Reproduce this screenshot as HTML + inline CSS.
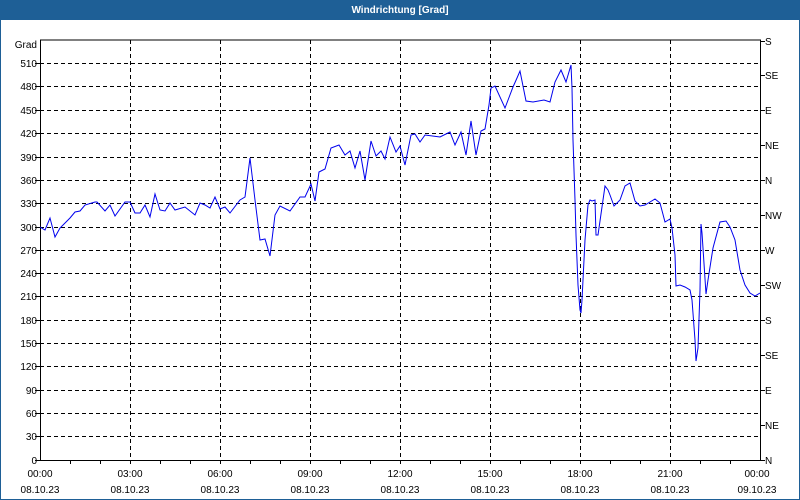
<!DOCTYPE html>
<html><head><meta charset="utf-8"><style>
html,body{margin:0;padding:0;width:800px;height:500px;overflow:hidden;background:#fff}
svg{display:block}
text{font-family:"Liberation Sans",sans-serif;font-size:10px;fill:#000}
</style></head><body>
<svg width="800" height="500" xmlns="http://www.w3.org/2000/svg">
<rect x="0" y="0" width="800" height="500" fill="#fff"/>
<rect x="0" y="0" width="800" height="20" fill="#1e5f96"/>
<rect x="0" y="0" width="1" height="500" fill="#1e5f96"/>
<rect x="799" y="0" width="1" height="500" fill="#1e5f96"/>
<rect x="0" y="499" width="800" height="1" fill="#1e5f96"/>
<text x="400" y="13" text-anchor="middle" style="fill:#fff;font-weight:bold;font-size:10px">Windrichtung [Grad]</text>
<g stroke="#000" stroke-dasharray="4,3" stroke-width="1">
<path d="M40 63.5H760M40 86.5H760M40 110.5H760M40 133.5H760M40 157.5H760M40 180.5H760M40 203.5H760M40 227.5H760M40 250.5H760M40 273.5H760M40 296.5H760M40 320.5H760M40 343.5H760M40 366.5H760M40 390.5H760M40 413.5H760M40 436.5H760"/>
<path d="M130.5 40V460M220.5 40V460M310.5 40V460M400.5 40V460M490.5 40V460M580.5 40V460M670.5 40V460"/>
</g>
<g stroke="#000" stroke-width="1" fill="none">
<path d="M40.5 40V460.5H760.5V40H40"/>
<path d="M760 41.5h5M760 75.5h5M760 110.5h5M760 145.5h5M760 180.5h5M760 215.5h5M760 250.5h5M760 285.5h5M760 320.5h5M760 355.5h5M760 390.5h5M760 425.5h5M760 460.5h5"/>
<path d="M35 63.5h5M35 86.5h5M35 110.5h5M35 133.5h5M35 157.5h5M35 180.5h5M35 203.5h5M35 227.5h5M35 250.5h5M35 273.5h5M35 296.5h5M35 320.5h5M35 343.5h5M35 366.5h5M35 390.5h5M35 413.5h5M35 436.5h5M35 460.5h5"/>
<path d="M70.5 460v4M100.5 460v4M130.5 460v4M160.5 460v4M190.5 460v4M220.5 460v4M250.5 460v4M280.5 460v4M310.5 460v4M340.5 460v4M370.5 460v4M400.5 460v4M430.5 460v4M460.5 460v4M490.5 460v4M520.5 460v4M550.5 460v4M580.5 460v4M610.5 460v4M640.5 460v4M670.5 460v4M700.5 460v4M730.5 460v4"/>
</g>
<g text-anchor="end">
<text x="37" y="48">Grad</text>
<text x="37" y="67">510</text><text x="37" y="90">480</text><text x="37" y="114">450</text><text x="37" y="137">420</text><text x="37" y="161">390</text><text x="37" y="184">360</text><text x="37" y="207">330</text><text x="37" y="231">300</text><text x="37" y="254">270</text><text x="37" y="277">240</text><text x="37" y="300">210</text><text x="37" y="324">180</text><text x="37" y="347">150</text><text x="37" y="370">120</text><text x="37" y="394">90</text><text x="37" y="417">60</text><text x="37" y="440">30</text><text x="37" y="464">0</text>
</g>
<g>
<text x="765" y="45">S</text><text x="765" y="79">SE</text><text x="765" y="114">E</text><text x="765" y="149">NE</text><text x="765" y="184">N</text><text x="765" y="219">NW</text><text x="765" y="254">W</text><text x="765" y="289">SW</text><text x="765" y="324">S</text><text x="765" y="359">SE</text><text x="765" y="394">E</text><text x="765" y="429">NE</text><text x="765" y="464">N</text>
</g>
<g text-anchor="middle">
<text x="40" y="477">00:00</text><text x="130" y="477">03:00</text><text x="220" y="477">06:00</text><text x="310" y="477">09:00</text><text x="400" y="477">12:00</text><text x="490" y="477">15:00</text><text x="580" y="477">18:00</text><text x="670" y="477">21:00</text><text x="757" y="477">00:00</text>
<text x="40" y="493">08.10.23</text><text x="130" y="493">08.10.23</text><text x="220" y="493">08.10.23</text><text x="310" y="493">08.10.23</text><text x="400" y="493">08.10.23</text><text x="490" y="493">08.10.23</text><text x="580" y="493">08.10.23</text><text x="670" y="493">08.10.23</text><text x="757" y="493">09.10.23</text>
</g>
<polyline fill="none" stroke="#0000ee" stroke-width="1" points="40,227 45,230 50,218 55,237 60,228 70,218 75,212 80,211 85,205 95,202 97,202 105,211 110,205 115,216 125,202 130,202 135,213 140,213 145,205 150,217 155,194 160,210 165,211 170,203 175,210 185,207 195,215 200,203 205,205 210,208 215,197 220,209 225,207 230,213 240,200 245,197 250,158 255,200 260,240 265,239 270,256 275,215 280,206 290,211 300,197 305,197 311,184 315,201 319,172 325,169 331,148 339,145 345,155 350,151 355,168 360,151 365,180 371,141 376,156 381,151 385,159 390,137 396,152 400,146 405,165 411,135 415,134 420,142 425,135 440,137 450,132 455,145 461,132 466,155 471,121 476,155 481,131 485,129 489,105 491,88 495,86 505,108 513,87 517,78 520,71 526,101 533,102 544,100 550,102 555,82 561,70 566,82 571,65 572,88 573,140 575,200 576,235 578,285 580,310 581,313 582,300 585,240 588,205 590,200 592,201 595,200 596,235 598,235 603,200 605,186 608,190 610,195 614,206 620,200 625,186 630,183 635,201 640,206 645,205 650,202 655,199 660,203 665,222 670,219 672,228 675,255 676,286 680,285 685,287 690,290 692,300 695,340 696,361 698,348 700,290 701,224 702,233 706,294 708,280 713,248 720,222 726,221 730,227 735,240 740,270 745,285 750,293 755,296 760,293"/>
</svg>
</body></html>
